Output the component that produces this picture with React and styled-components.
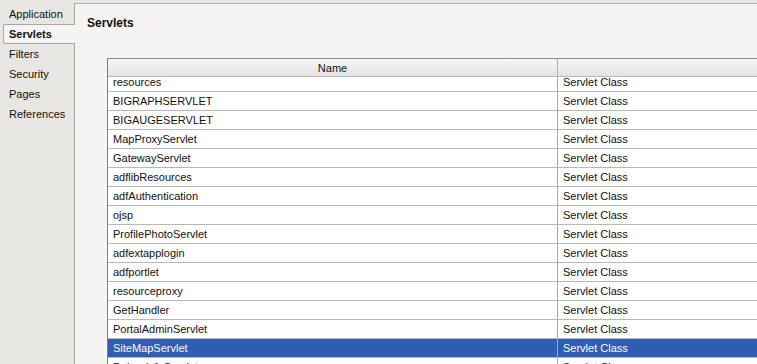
import React from "react";
import styled, { createGlobalStyle } from "styled-components";

const GlobalStyle = createGlobalStyle`
    html, body {
        margin: 0;
        padding: 0;
        overflow: hidden;
    }
    body {
        font-family: "Liberation Sans", Arial, sans-serif;
        font-size: 11px;
        color: #111;
        background: #e8e6e2;
    }
`;

const navItems = ["Application", "Servlets", "Filters", "Security", "Pages", "References"];

const servlets = [
    "resources",
    "BIGRAPHSERVLET",
    "BIGAUGESERVLET",
    "MapProxyServlet",
    "GatewayServlet",
    "adflibResources",
    "adfAuthentication",
    "ojsp",
    "ProfilePhotoServlet",
    "adfextapplogin",
    "adfportlet",
    "resourceproxy",
    "GetHandler",
    "PortalAdminServlet",
    "SiteMapServlet",
    "DebugInfoServlet",
];

function App() {
    const selected = "SiteMapServlet";
    return (
        <>
            <GlobalStyle />
            <Page>
                <Nav>
                    {navItems.map((item) => (
                        <NavItem key={item} active={item === "Servlets"}>
                            {item}
                        </NavItem>
                    ))}
                </Nav>
                <Panel>
                    <Title>Servlets</Title>
                    <Table>
                        <Header>
                            <HeadCell>Name</HeadCell>
                            <HeadCell></HeadCell>
                        </Header>
                        <Body>
                            <List offset={4}>
                                {servlets.map((name) => (
                                    <Row key={name} selected={name === selected}>
                                        <Cell>{name}</Cell>
                                        <Cell>Servlet Class</Cell>
                                    </Row>
                                ))}
                            </List>
                        </Body>
                    </Table>
                </Panel>
            </Page>
        </>
    );
}

export default App;

const Page = styled.div`
    display: flex;
    width: 757px;
    height: 364px;
    overflow: hidden;
    background: #e8e6e2;
`;
const Nav = styled.ul`
    list-style: none;
    margin: 0;
    padding: 4px 0 0 3px;
    width: 71px;
    flex-shrink: 0;
    position: relative;
    z-index: 1;
`;
const NavItem = styled.li`
    height: 20px;
    line-height: 19px;
    padding-left: 5px;
    margin-right: ${(p) => (p.active ? "-1px" : "0")};
    font-weight: ${(p) => (p.active ? "bold" : "normal")};
    background: ${(p) => (p.active ? "#f5f4f2" : "transparent")};
    border: 1px solid ${(p) => (p.active ? "#a9a7a2" : "transparent")};
    border-right: none;
    border-radius: 2px 0 0 2px;
    box-sizing: border-box;
    color: #111;
`;
const Panel = styled.div`
    flex: 1;
    margin-top: 3px;
    background: #f5f4f2;
    border-top: 1px solid #b4b2ad;
    border-left: 1px solid #a9a7a2;
    display: flex;
    flex-direction: column;
    min-width: 0;
`;
const Title = styled.h1`
    margin: 0;
    padding: 12px 0 0 12px;
    height: 35px;
    box-sizing: border-box;
    font-size: 12px;
    font-weight: bold;
    color: #111;
`;
const Table = styled.div`
    margin-left: 32px;
    margin-top: 19px;
    flex: 1;
    display: flex;
    flex-direction: column;
    background: #fff;
    border-left: 1px solid #7f7f7f;
    border-top: 1px solid #8c8c8c;
    min-height: 0;
`;
const Header = styled.div`
    display: grid;
    grid-template-columns: 450px 1fr;
    height: 17px;
    background: linear-gradient(#f6f6f6, #e4e4e4);
    border-bottom: 1px solid #b9b9b9;
`;
const HeadCell = styled.div`
    text-align: center;
    line-height: 18px;
    border-right: 1px solid #b0b0b0;
    &:last-child {
        border-right: none;
    }
`;
const Body = styled.div`
    flex: 1;
    overflow: hidden;
`;
const List = styled.div`
    margin-top: -${(p) => p.offset}px;
`;
const Row = styled.div`
    display: grid;
    grid-template-columns: 450px 1fr;
    height: 19px;
    box-sizing: border-box;
    border-bottom: 1px solid #b8b8b8;
    background: ${(p) => (p.selected ? "#2f5db5" : "#fff")};
    color: ${(p) => (p.selected ? "#fff" : "#111")};
`;
const Cell = styled.div`
    line-height: 19px;
    padding-left: 5px;
    white-space: nowrap;
    border-right: 1px solid #a8a8a8;
    &:last-child {
        border-right: none;
    }
`;
